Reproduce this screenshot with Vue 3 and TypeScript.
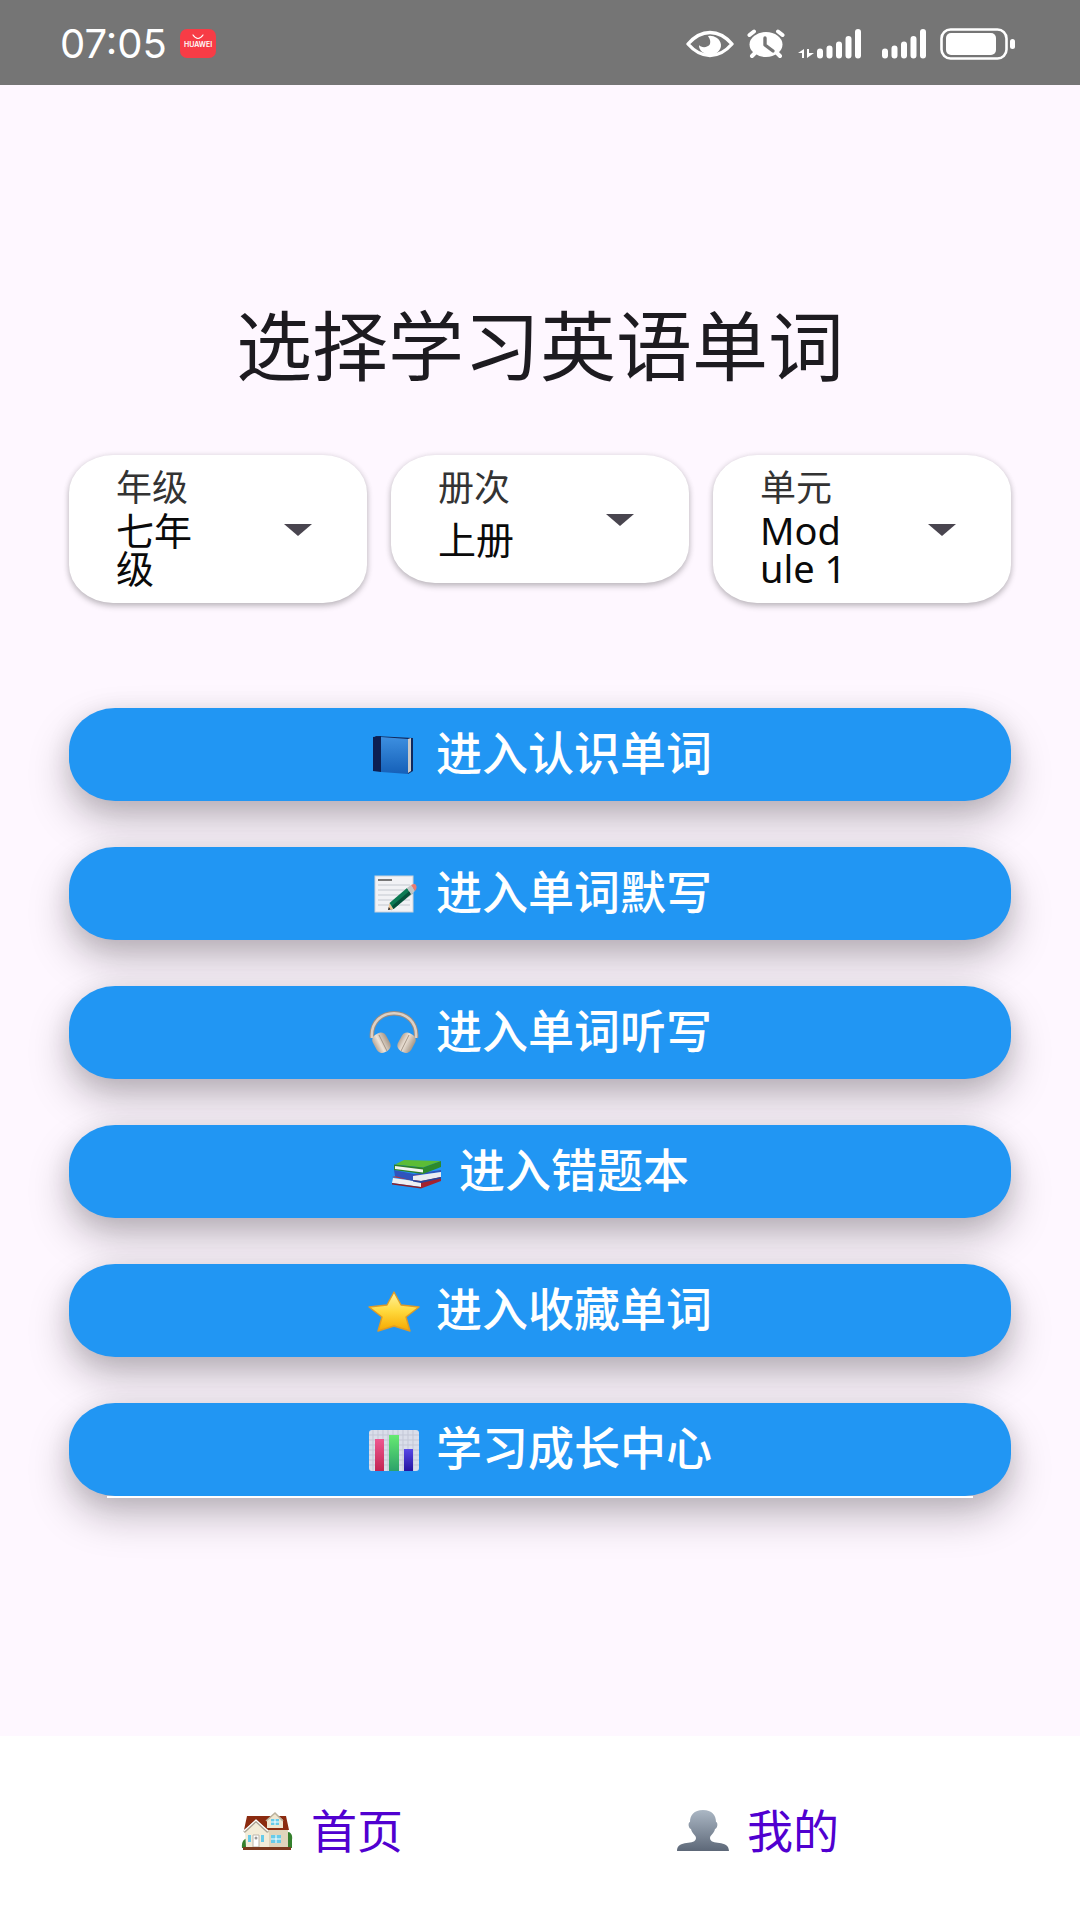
<script setup lang="ts">
import { ref } from 'vue'

interface Picker {
  id: string
  label: string
  options: string[]
}

interface Action {
  icon: 'book' | 'memo' | 'headphones' | 'books' | 'star' | 'chart'
  text: string
}

const pickers: Picker[] = [
  { id: 'grade', label: '年级', options: ['七年级', '八年级', '九年级'] },
  { id: 'volume', label: '册次', options: ['上册', '下册'] },
  { id: 'unit', label: '单元', options: ['Module 1', 'Module 2', 'Module 3'] },
]

const selected = ref<Record<string, string>>({
  grade: '七年级',
  volume: '上册',
  unit: 'Module 1',
})

const actions: Action[] = [
  { icon: 'book', text: '进入认识单词' },
  { icon: 'memo', text: '进入单词默写' },
  { icon: 'headphones', text: '进入单词听写' },
  { icon: 'books', text: '进入错题本' },
  { icon: 'star', text: '进入收藏单词' },
  { icon: 'chart', text: '学习成长中心' },
]
</script>

<template>
  <div class="screen">
    <header class="status">
      <span class="time">07:05</span>
      <svg class="store" width="36" height="30" viewBox="0 0 36 30">
        <rect width="36" height="29" rx="7" fill="#f73c46" />
        <path d="M13 6q5 7 10 0" fill="none" stroke="#fff" stroke-width="1.2" stroke-linecap="round" />
        <text x="18" y="18" text-anchor="middle" font-size="7" font-weight="600" fill="#fff">HUAWEI</text>
      </svg>
      <div class="indicators">
        <svg width="48" height="30" viewBox="0 0 48 30">
          <path d="M2 15Q12 3.500 24 3.500T46 15Q36 26.500 24 26.500T2 15Z" fill="none" stroke="#fff" stroke-width="3.400" stroke-linejoin="round" />
          <path d="M22 7a11 9.500 0 1 1-9 9c2 3 9 3 11-1 1-4-1-6-2-8Z" fill="#fff" />
        </svg>
        <svg width="40" height="30" viewBox="0 0 40 30">
          <ellipse cx="20" cy="15.500" rx="16.500" ry="12.500" fill="#fff" />
          <path d="M3.500 6 8 2.500M36.500 6 32 2.500M9 24l-3 3M31 24l3 3" stroke="#fff" stroke-width="4" stroke-linecap="round" />
          <path d="M19 9v7l8 6" fill="none" stroke="#757575" stroke-width="3.400" stroke-linecap="round" stroke-linejoin="round" />
        </svg>
        <svg width="64" height="30" viewBox="0 0 64 30">
          <path d="M0 24l6-4v9H4v-5zM9 20h2v4h5l-7 5z" fill="#fff" />
          <path d="M22 22.500v4M31.500 19.500v7M41 15.500v11M50.500 10v16.500M60 3v23.500" stroke="#fff" stroke-width="6" stroke-linecap="round" />
        </svg>
        <svg class="second-sim" width="46" height="30" viewBox="0 0 46 30">
          <path d="M3 22.500v4M12.500 19.500v7M22 15.500v11M31.500 10v16.500M41 3v23.500" stroke="#fff" stroke-width="6" stroke-linecap="round" />
        </svg>
        <svg width="76" height="32" viewBox="0 0 76 32">
          <rect x="1.500" y="1.500" width="65" height="29" rx="9" fill="none" stroke="#fff" stroke-width="2.600" />
          <rect x="6" y="5" width="50" height="22" rx="5" fill="#fff" />
          <rect x="70" y="11" width="5" height="10" rx="2.500" fill="#fff" />
        </svg>
      </div>
    </header>

    <main class="content">
      <h1 class="title">选择学习英语单词</h1>

      <div class="pickers">
        <div v-for="p in pickers" :key="p.id" class="picker">
          <div class="picker-text">
            <label class="picker-label" :for="p.id">{{ p.label }}</label>
            <div class="picker-value"><span>{{ selected[p.id] }}</span></div>
          </div>
          <svg class="caret" width="28" height="12" viewBox="0 0 28 12">
            <path d="M0 0h28L14 12z" fill="#49454f" />
          </svg>
          <select :id="p.id" v-model="selected[p.id]" class="picker-select">
            <option v-for="o in p.options" :key="o" :value="o">{{ o }}</option>
          </select>
        </div>
      </div>

      <div class="actions">
        <button v-for="a in actions" :key="a.icon" type="button" class="action">
          <svg v-if="a.icon === 'book'" width="52" height="44" viewBox="0 0 52 44">
            <defs>
              <linearGradient id="cover" x1="0" y1="0" x2="0" y2="1">
                <stop offset="0" stop-color="#3d8fe0" />
                <stop offset="1" stop-color="#1560b8" />
              </linearGradient>
            </defs>
            <path d="M7 3l38 2v33l-5 3z" fill="#10285c" />
            <path d="M40 6l3-1v33l-3 2z" fill="#c9c9c9" />
            <path d="M5 4l8-1v36l-8-1z" fill="#0d1f52" />
            <path d="M13 4l27 2v35l-27-2z" fill="url(#cover)" />
          </svg>
          <svg v-else-if="a.icon === 'memo'" width="52" height="44" viewBox="0 0 52 44">
            <rect x="7" y="4" width="38" height="36" fill="#f1f2f5" stroke="#ccd2da" stroke-width="1" />
            <path d="M10 8h14" stroke="#777" stroke-width="2" />
            <path d="M10 13h32M10 18h32M10 23h32M10 28h32M10 33h32" stroke="#c4c7cf" stroke-width="1.200" />
            <path d="M22 37l22-17" stroke="#000" stroke-opacity=".22" stroke-width="4" />
            <path d="M20 38l5.500-1-4-6z" fill="#ecc391" />
            <path d="M20 38l2.500-.5-1.700-2.500z" fill="#222" />
            <path d="M21.500 31L39 16l4 6-17.500 15z" fill="#0c7a53" />
            <path d="M24 34L41.500 19l1.500 3-17.500 15z" fill="#05503a" />
            <path d="M39 16l4-3 4 6-4 3z" fill="#c2c5c7" />
            <path d="M43 13q4-2 5 0 1.500 3-1 6z" fill="#e77b72" />
          </svg>
          <svg v-else-if="a.icon === 'headphones'" width="52" height="44" viewBox="0 0 52 44">
            <defs>
              <linearGradient id="cup" x1="0" y1="0" x2="1" y2="0">
                <stop offset="0" stop-color="#b7a797" />
                <stop offset=".4" stop-color="#eee4d9" />
                <stop offset="1" stop-color="#a79888" />
              </linearGradient>
            </defs>
            <path d="M4 27C1 -6 51 -6 48 27" fill="none" stroke="#9b8d82" stroke-width="4.500" />
            <path d="M4 27C1 -6 51 -6 48 27" fill="none" stroke="#ddd1c5" stroke-width="2.600" />
            <rect x="6" y="22" width="15" height="20" rx="6" transform="rotate(-28 13 32)" fill="url(#cup)" />
            <rect x="31" y="22" width="15" height="20" rx="6" transform="rotate(28 39 32)" fill="url(#cup)" />
            <path d="M11 24l8 16M33 40l8-16" stroke="#a39586" stroke-width="1" />
          </svg>
          <svg v-else-if="a.icon === 'books'" width="52" height="44" viewBox="0 0 52 44">
            <path d="M1 27l14-3 35 2-20 6z" fill="#b5333c" />
            <path d="M2 28l28 4v5L1 33z" fill="#eef0f2" />
            <path d="M1 33l29 4v1.500L1 34.500z" fill="#8c1f2a" />
            <path d="M30 32l20-6v5l-20 7.500z" fill="#a3222e" />
            <path d="M3 20l20 4 27-4v2l-28 4v5L4 26z" fill="#2f55bd" />
            <path d="M22 26l28-4v5l-20 4-8-1z" fill="#e9ecf2" />
            <path d="M22 30l8 1 20-4v1.500L30 33l-8-1.500z" fill="#27449a" />
            <path d="M4 14.500L13 10l37 1-18 6.500z" fill="#5cbc36" />
            <path d="M3 14.500l29 3V24L3 20z" fill="#2c7f2a" />
            <path d="M4 16l28 3.500v3L4 19z" fill="#f2f4f0" />
            <path d="M32 17.500L50 11v6l-18 7z" fill="#2d8a2c" />
          </svg>
          <svg v-else-if="a.icon === 'star'" width="52" height="44" viewBox="0 0 52 44">
            <defs>
              <linearGradient id="gold" x1="0" y1="0" x2="0" y2="1">
                <stop offset="0" stop-color="#fff3a0" />
                <stop offset=".5" stop-color="#ffd83b" />
                <stop offset="1" stop-color="#f5a800" />
              </linearGradient>
            </defs>
            <path d="M26 3l7 13 18 2-13 10 4 14-16-5-16 5 4-14L1 18l18-2z" fill="url(#gold)" stroke="#dd9b28" stroke-width="1.400" stroke-linejoin="round" />
          </svg>
          <svg v-else width="52" height="44" viewBox="0 0 52 44">
            <defs>
              <linearGradient id="bar-red" x1="0" y1="0" x2="0" y2="1">
                <stop offset="0" stop-color="#ee5790" />
                <stop offset="1" stop-color="#c22452" />
              </linearGradient>
              <linearGradient id="bar-green" x1="0" y1="0" x2="0" y2="1">
                <stop offset="0" stop-color="#66ea72" />
                <stop offset="1" stop-color="#2ca26a" />
              </linearGradient>
              <linearGradient id="bar-blue" x1="0" y1="0" x2="0" y2="1">
                <stop offset="0" stop-color="#5747e6" />
                <stop offset="1" stop-color="#2413a0" />
              </linearGradient>
            </defs>
            <rect x="1" y="2" width="50" height="41" rx="3" fill="#dadeea" />
            <path d="M5 2v41M10 2v41M15 2v41M20 2v41M25 2v41M30 2v41M35 2v41M40 2v41M45 2v41M1 7h50M1 12h50M1 17h50M1 22h50M1 27h50M1 32h50M1 37h50" stroke="#c3c7d6" stroke-width="1" />
            <rect x="7" y="11" width="9" height="32" fill="url(#bar-red)" />
            <rect x="21" y="7" width="10" height="36" fill="url(#bar-green)" />
            <rect x="36" y="21" width="9" height="22" fill="url(#bar-blue)" />
          </svg>
          <span class="action-text">{{ a.text }}</span>
        </button>
      </div>
    </main>

    <nav class="tabs">
      <a href="#home" class="tab">
        <svg width="52" height="44" viewBox="0 0 52 44">
          <path d="M6 30q-6 2-5 10h8zM44 30q0-6 4-6 4 2 3 8v8h-7z" fill="#35802d" />
          <path d="M5 19h42v20H5z" fill="#ede3cc" />
          <path d="M27 22h20v17H27z" fill="#e0d5bc" />
          <path d="M6 8h39l3 14H27L15 14 3 22z" fill="#8b2b10" />
          <path d="M4 24l11-9 13 10v14H5z" fill="#f3ecd8" />
          <path d="M3 24l12-11 12 11" fill="none" stroke="#aaa292" stroke-width="2.400" />
          <path d="M3 23l12-11 12 11" fill="none" stroke="#fff" stroke-width="1.200" />
          <path d="M26 12l8-7 8 7v8H26z" fill="#efe6d0" />
          <path d="M25 13l9-8 8 8" fill="none" stroke="#bbb19d" stroke-width="1.600" />
          <path d="M30 11h8v6h-8zM30 27h10v8H30zM7 27h3v7H7zM20 27h3v7h-3z" fill="#68cbe9" />
          <path d="M34 11v6M30 14h8M35 27v8M30 31h10" stroke="#fff" stroke-width="1" />
          <path d="M12 27h6v12h-6z" fill="#fff" stroke="#bdb6aa" stroke-width="1" />
          <circle cx="15" cy="30" r="1.500" fill="#999" />
          <path d="M2 39h48v3H2z" fill="#7c3a1e" />
        </svg>
        <span>首页</span>
      </a>
      <a href="#me" class="tab">
        <svg width="52" height="44" viewBox="0 0 52 44">
          <defs>
            <linearGradient id="person" x1="0" y1="0" x2="0" y2="1">
              <stop offset="0" stop-color="#abb7c4" />
              <stop offset="1" stop-color="#5d6878" />
            </linearGradient>
          </defs>
          <path d="M26 2c9 0 13 5 13 12 2 0 2 6-1 7-1 5-5 6-5 9 0 8 19 1 19 13H0c0-12 19-5 19-13 0-3-4-4-5-9-3-1-3-7-1-7C13 7 17 2 26 2z" fill="url(#person)" />
        </svg>
        <span>我的</span>
      </a>
    </nav>
  </div>
</template>

<style>
body {
  margin: 0;
}
</style>

<style scoped>
.screen {
  min-height: 100vh;
  display: flex;
  flex-direction: column;
  background: #fef7ff;
  font-family: "Noto Sans", "Noto Sans CJK SC", sans-serif;
}

.status {
  box-sizing: border-box;
  height: 85px;
  padding: 2px 64px 0 60px;
  display: flex;
  align-items: center;
  background: #757575;
  color: #fff;
}

.time {
  font-family: Inter, sans-serif;
  font-size: 40px;
  line-height: 48px;
}

.store {
  margin-left: 13px;
  font-family: Inter, sans-serif;
}

.indicators {
  margin-left: auto;
  display: flex;
  align-items: center;
  gap: 12px;
}

.second-sim {
  margin-left: 8px;
}

.content {
  flex: 1;
  padding: 216px 69px 0;
}

.title {
  margin: 0;
  font-size: 76px;
  line-height: 90px;
  font-weight: 400;
  text-align: center;
  color: #1d1b20;
}

.pickers {
  margin-top: 64px;
  min-height: 148px;
  display: flex;
  align-items: flex-start;
  gap: 24px;
}

.picker {
  position: relative;
  box-sizing: border-box;
  flex: 1;
  display: flex;
  align-items: center;
  justify-content: space-between;
  padding: 14px 55px 16px 47px;
  border-radius: 44px / 38px;
  background: #fff;
  box-shadow: 0 3px 6px rgba(0, 0, 0, 0.24), 0 0 6px rgba(0, 0, 0, 0.08);
}

.picker:focus-within {
  outline: 2px solid #2196f3;
}

.picker-text {
  width: 90px;
}

.picker-label {
  display: block;
  margin-bottom: 4px;
  font-size: 36px;
  line-height: 38px;
  color: #333;
}

.picker-value {
  min-height: 56px;
  display: flex;
  align-items: center;
  font-size: 38px;
  line-height: 38px;
  word-break: break-all;
  color: #0a0a0a;
}

.caret {
  margin-top: 4px;
}

.picker-select {
  position: absolute;
  inset: 0;
  width: 100%;
  height: 100%;
  opacity: 0;
  cursor: pointer;
}

.actions {
  margin-top: 105px;
  display: flex;
  flex-direction: column;
  gap: 46px;
}

.action {
  height: 93px;
  display: flex;
  align-items: center;
  justify-content: center;
  gap: 16px;
  border: 0;
  padding: 0;
  border-radius: 46px / 42px;
  background: #2196f3;
  color: #fff;
  font-family: inherit;
  font-size: 46px;
  line-height: 60px;
  font-weight: 500;
  cursor: pointer;
  box-shadow: 0 20px 40px rgba(20, 10, 20, 0.26), 0 4px 24px rgba(20, 10, 20, 0.1);
}

.action-text {
  padding-bottom: 6px;
}

.action:last-child {
  position: relative;
}

.action:last-child::after {
  content: "";
  position: absolute;
  left: 38px;
  right: 38px;
  bottom: -2px;
  height: 2px;
  background: #fff;
}

.tabs {
  box-sizing: border-box;
  min-height: 184px;
  padding: 4px 104px 0;
  display: flex;
  align-items: center;
  background: #fff;
}

.tab {
  flex: 1;
  display: flex;
  align-items: center;
  justify-content: center;
  gap: 18px;
  font-size: 46px;
  line-height: 60px;
  text-decoration: none;
  color: #5000d0;
}
</style>
